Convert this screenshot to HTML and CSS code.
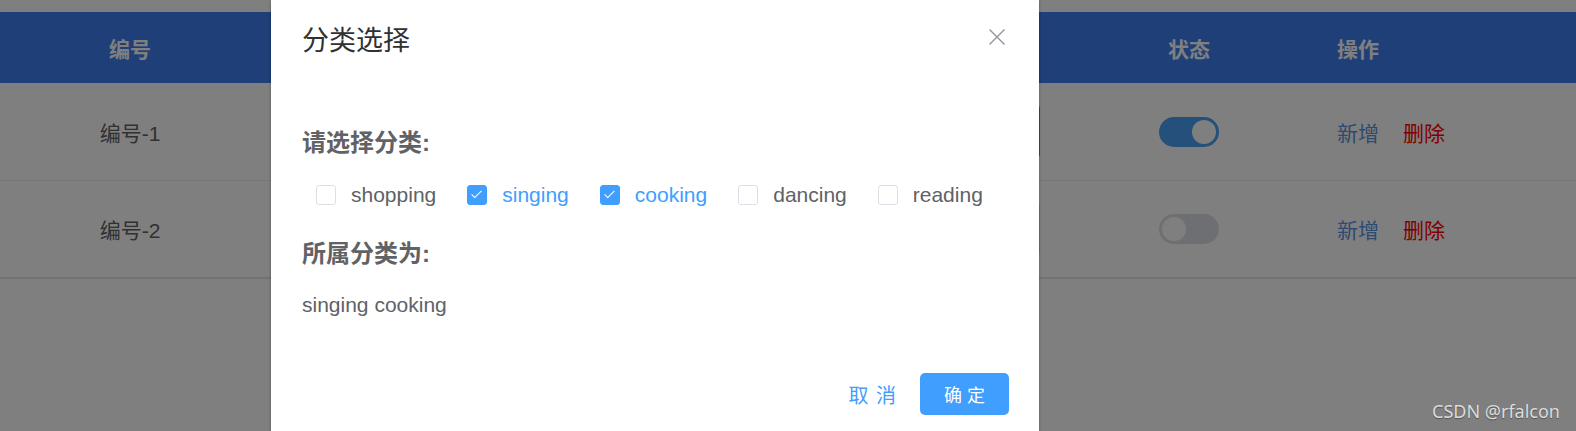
FILE: index.html
```html
<!DOCTYPE html>
<html lang="zh-CN">
<head>
<meta charset="utf-8">
<title>分类选择</title>
<link rel="stylesheet" href="styles.css">
</head>
<body>
<div class="page">
  <div class="table">
    <div class="row head">
      <div class="cell c1">编号</div>
      <div class="cell c2"></div>
      <div class="cell c3">状态</div>
      <div class="cell c4">操作</div>
    </div>
    <div class="row">
      <div class="cell c1">编号-1</div>
      <div class="cell c2"><div class="input focus"></div></div>
      <div class="cell c3"><span class="switch on"><span class="knob"></span></span></div>
      <div class="cell c4"><span class="link add">新增</span><span class="link del">删除</span></div>
    </div>
    <div class="row last">
      <div class="cell c1">编号-2</div>
      <div class="cell c2"><div class="input"></div></div>
      <div class="cell c3"><span class="switch"><span class="knob"></span></span></div>
      <div class="cell c4"><span class="link add">新增</span><span class="link del">删除</span></div>
    </div>
  </div>
</div>

<div class="mask"></div>

<div class="dialog">
  <div class="dialog-header">
    <span class="dialog-title">分类选择</span>
    <span class="close">
      <svg width="16" height="16" viewBox="0 0 16 16"><path d="M0.5 0.5 L15.5 15.5 M15.5 0.5 L0.5 15.5" stroke="#909399" stroke-width="1.4" fill="none"/></svg>
    </span>
  </div>
  <div class="dialog-body">
    <div class="label first">请选择分类:</div>
    <div class="group">
      <label class="cb"><span class="box"></span><span class="txt">shopping</span></label>
      <label class="cb checked"><span class="box"></span><span class="txt">singing</span></label>
      <label class="cb checked"><span class="box"></span><span class="txt">cooking</span></label>
      <label class="cb"><span class="box"></span><span class="txt">dancing</span></label>
      <label class="cb"><span class="box"></span><span class="txt">reading</span></label>
    </div>
    <div class="label second">所属分类为:</div>
    <div class="result">singing cooking</div>
  </div>
  <div class="dialog-footer">
    <span class="btn-text">取 消</span>
    <span class="btn-primary">确 定</span>
  </div>
</div>

<div class="watermark">CSDN @rfalcon</div>
</body>
</html>
```
FILE: styles.css
```css
html, body {
  margin: 0;
  padding: 0;
  background: #fff;
  font-family: "Liberation Sans", "Noto Sans CJK SC", sans-serif;
  overflow: hidden;
  height: 431px;
}

.page {
  padding-top: 12px;
}

.table {
  width: 1576px;
  border-bottom: 2px solid #e3e5ec;
}

.row {
  display: grid;
  grid-template-columns: 260px 826px 206px 284px;
  height: 97px;
  border-bottom: 1px solid #ebeef5;
  font-size: 21px;
  color: #606266;
}

.row.last {
  border-bottom: none;
  height: 96px;
}

.row.head {
  height: 71px;
  background: #3e7ef0;
  color: #fff;
  font-weight: bold;
  border-bottom: none;
}

.cell {
  display: flex;
  align-items: center;
}

.c1, .c3 {
  justify-content: center;
}

.c2 {
  justify-content: flex-end;
  padding-right: 46px;
}

.c4 {
  padding-left: 45px;
  gap: 24px;
}

.input {
  width: 320px;
  height: 55px;
  border: 1px solid #dcdfe6;
  border-radius: 6px;
  box-sizing: content-box;
}

.input.focus {
  border-color: #409eff;
}

.switch {
  width: 60px;
  height: 30px;
  border-radius: 15px;
  background: #dcdfe6;
  display: flex;
  align-items: center;
  padding: 0 3px;
  box-sizing: border-box;
}

.switch.on {
  background: #4aa0f8;
  justify-content: flex-end;
}

.knob {
  width: 24px;
  height: 24px;
  border-radius: 50%;
  background: #fff;
}

.link.add {
  color: #5a94e0;
}

.link.del {
  color: #ff0000;
}

.mask {
  position: absolute;
  left: 0;
  top: 0;
  width: 1576px;
  height: 431px;
  background: rgba(0, 0, 0, 0.5);
}

.dialog {
  position: absolute;
  left: 271px;
  top: 0;
  width: 768px;
  height: 480px;
  background: #fff;
  box-shadow: 0 1px 3px rgba(0, 0, 0, 0.3);
}

.dialog-header {
  padding: 24px 30px 0 31px;
  height: 34px;
  position: relative;
}

.dialog-title {
  font-size: 27px;
  line-height: 34px;
  color: #303133;
}

.close {
  position: absolute;
  top: 29px;
  right: 34px;
  width: 16px;
  height: 16px;
  display: block;
}

.close svg {
  display: block;
}

.dialog-body {
  padding: 0 30px 0 31px;
}

.label {
  font-size: 24px;
  font-weight: bold;
  color: #606266;
  line-height: 30px;
}

.label.first {
  margin-top: 70px;
}

.label.second {
  margin-top: 29px;
}

.group {
  margin-top: 22px;
  height: 30px;
  display: flex;
  align-items: center;
  padding-left: 14px;
  gap: 31px;
}

.cb {
  display: flex;
  align-items: center;
  gap: 15px;
  font-size: 21px;
  color: #606266;
}

.box {
  width: 20px;
  height: 20px;
  border: 1px solid #dcdfe6;
  border-radius: 3px;
  box-sizing: border-box;
  background: #fff;
  position: relative;
}

.cb.checked .box {
  background: #409eff;
  border-color: #409eff;
}

.cb.checked .box::after {
  content: "";
  position: absolute;
  left: 6px;
  top: 2px;
  width: 4px;
  height: 9px;
  border-right: 1.5px solid #fff;
  border-bottom: 1.5px solid #fff;
  transform: rotate(45deg);
}

.cb.checked .txt {
  color: #409eff;
}

.result {
  margin-top: 22px;
  font-size: 21px;
  line-height: 28px;
  color: #606266;
}

.dialog-footer {
  margin-top: 54px;
  padding-right: 30px;
  display: flex;
  justify-content: flex-end;
  align-items: center;
  gap: 23px;
}

.btn-text {
  font-size: 20px;
  color: #409eff;
  letter-spacing: 1px;
}

.btn-primary {
  width: 89px;
  height: 42px;
  border-radius: 5px;
  background: #409eff;
  color: #fff;
  font-size: 18px;
  display: flex;
  align-items: center;
  justify-content: center;
}

.watermark {
  position: absolute;
  right: 16px;
  bottom: 8px;
  font-family: "Noto Sans", "Open Sans", sans-serif;
  font-size: 18px;
  color: #dcdcdc;
  text-shadow: 0 1px 1px rgba(0, 0, 0, 0.35);
}
```
